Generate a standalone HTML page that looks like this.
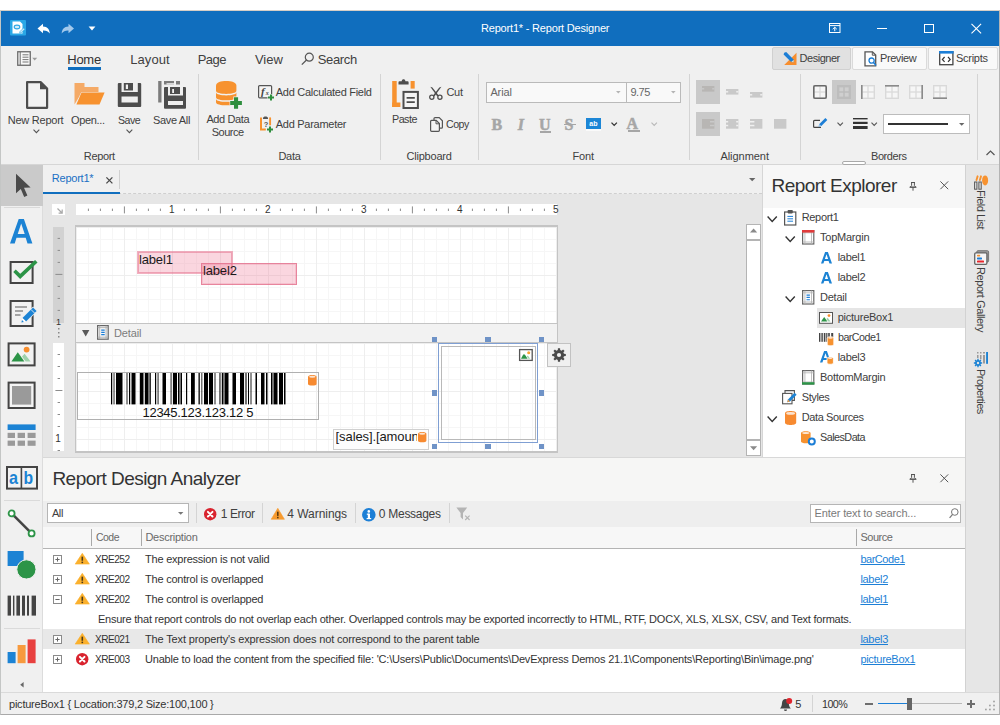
<!DOCTYPE html>
<html lang="en"><head><meta charset="utf-8"><title>Report1* - Report Designer</title>
<style>
html,body{margin:0;padding:0;background:#fff;}
body{width:1000px;height:725px;position:relative;overflow:hidden;font-family:"Liberation Sans",sans-serif;font-size:11px;color:#404040;}
div,svg,span.t,a.t{position:absolute;box-sizing:border-box;}
.t{white-space:pre;display:block;}
svg{overflow:visible;}

</style></head>
<body>
<div style="left:0px;top:10px;width:1000px;height:705px;background:#f0f0f0;border:1px solid #a9a9a9;border-top-color:#d6cec6;border-left-color:#c4c6c5;border-right-color:#b4b4b4;"></div>
<div style="left:1px;top:11px;width:998px;height:35px;background:#106ebe;"></div>
<span class="t" style='left:481.0px;top:23px;font-size:11px;line-height:11px;color:#fff;letter-spacing:-0.19px;'>Report1* - Report Designer</span>
<svg style="left:10px;top:20px;" width="16" height="16" viewBox="0 0 16 16"><rect x="0" y="0" width="16" height="15.5" rx="1" fill="#2aa7e6"/><path d="M2.500 1.500h7.500l2.500 2.500v9.500h-10z" fill="#fff"/><ellipse cx="7" cy="7" rx="2.800" ry="1.900" fill="#d6edf9" stroke="#2aa7e6" stroke-width="1.100"/><path d="M10 11.500l3.600-3.600 1.300 1.300-3.600 3.600-1.700.4z" fill="#c9e8f8" stroke="#2aa7e6" stroke-width=".6"/></svg>
<svg style="left:37px;top:22.5px;" width="14" height="12" viewBox="0 0 14 12"><path d="M0.5 5.5L6 0.8V3.6C10.5 3.6 12.6 6.5 12.8 10.6C11.2 8.3 9.3 7.4 6 7.5V10.2Z" fill="#fff"/></svg>
<svg style="left:61px;top:22.5px;" width="14" height="12" viewBox="0 0 14 12"><path d="M13 5.5L7.5 0.8V3.6C3 3.6 0.9 6.5 0.7 10.6C2.3 8.3 4.2 7.4 7.5 7.5V10.2Z" fill="#a3c9ec"/></svg>
<svg style="left:88px;top:26px;" width="8" height="5" viewBox="0 0 8 5"><path d="M0.6 0.6h6.8L4 4.4z" fill="#fff"/></svg>
<svg style="left:829px;top:23px;" width="12" height="10" viewBox="0 0 12 10"><rect x=".5" y=".5" width="10.5" height="9" fill="none" stroke="#fff" stroke-width="1"/><path d="M.5 2.6h10.5" stroke="#fff" stroke-width="1"/><path d="M5.75 8.2V4.3M3.7 6.2l2.05-2 2.05 2" fill="none" stroke="#fff" stroke-width="1"/></svg>
<div style="left:877px;top:28px;width:10px;height:1px;background:#fff;"></div>
<div style="left:924px;top:23.5px;width:10px;height:9.5px;border:1px solid #fff;"></div>
<svg style="left:971px;top:23px;" width="11" height="11" viewBox="0 0 11 11"><path d="M.5 .8l9.6 9.6M10.1 .8L.5 10.4" stroke="#fff" stroke-width="1.1" fill="none"/></svg>
<svg style="left:17px;top:51px;" width="22" height="16" viewBox="0 0 22 16"><rect x=".75" y=".75" width="12.5" height="13.5" fill="#f8f8f8" stroke="#6a6a6a" stroke-width="1.3"/><path d="M3.2 1v13" stroke="#6a6a6a" stroke-width="1"/><path d="M5.5 3.8h6M5.5 6.2h6M5.5 8.6h6M5.5 11h6" stroke="#777" stroke-width="1"/><path d="M15.2 6.8h5l-2.5 2.8z" fill="#9a9a9a"/></svg>
<span class="t" style='left:67.28px;top:52.6px;font-size:13px;line-height:13px;color:#333;letter-spacing:-0.26px;'>Home</span>
<div style="left:68px;top:67px;width:33.4px;height:2.6px;background:#106ebe;"></div>
<span class="t" style='left:130.28px;top:52.6px;font-size:13px;line-height:13px;color:#404040;letter-spacing:0.05px;'>Layout</span>
<span class="t" style='left:197.69px;top:52.6px;font-size:13px;line-height:13px;color:#404040;letter-spacing:-0.55px;'>Page</span>
<span class="t" style='left:254.88px;top:52.6px;font-size:13px;line-height:13px;color:#404040;letter-spacing:-0.01px;'>View</span>
<svg style="left:301px;top:52px;" width="14" height="14" viewBox="0 0 14 14"><circle cx="8.3" cy="5.2" r="4" fill="none" stroke="#555" stroke-width="1.2"/><path d="M5.5 8L.8 12.6" stroke="#555" stroke-width="1.3"/></svg>
<span class="t" style='left:317.69px;top:52.6px;font-size:13px;line-height:13px;color:#404040;letter-spacing:-0.34px;'>Search</span>
<div style="left:772px;top:47px;width:79px;height:22.5px;background:#e1e1e1;border:1px solid #d0d0d0;border-radius:2px;"></div>
<div style="left:852px;top:47px;width:74.5px;height:22.5px;background:#f9f9f9;border:1px solid #dadada;border-radius:2px;"></div>
<div style="left:928px;top:47px;width:70px;height:22.5px;background:#f9f9f9;border:1px solid #dadada;border-radius:2px;"></div>
<svg style="left:783px;top:52px;" width="14" height="13" viewBox="0 0 14 13"><path d="M13.5 0.8V13H1.2z" fill="#f78e2e"/><path d="M1.2 0.8l2-0.8 7.6 7.8-0.2 2.4-2.4-.2L0.6 2.4z" fill="#1c7ed6"/><path d="M8.2 10l2.4.2.2-2.4" fill="#f5d9b8"/></svg>
<span class="t" style='left:799.6px;top:53px;font-size:11px;line-height:11px;color:#404040;letter-spacing:-0.49px;'>Designer</span>
<svg style="left:864px;top:51px;" width="14" height="16" viewBox="0 0 14 16"><path d="M1 .8h7.5l3.2 3.2v10.8H1z" fill="#fff" stroke="#555" stroke-width="1.3"/><path d="M8.3 .8v3.4h3.4" fill="none" stroke="#555" stroke-width="1"/><circle cx="7.6" cy="9.6" r="2.6" fill="#fff" stroke="#1c7ed6" stroke-width="1.3"/><path d="M9.5 11.6l2.6 2.8" stroke="#1c7ed6" stroke-width="1.5"/></svg>
<span class="t" style='left:880.0px;top:53px;font-size:11px;line-height:11px;color:#404040;letter-spacing:-0.42px;'>Preview</span>
<svg style="left:939px;top:51px;" width="15" height="15" viewBox="0 0 15 15"><rect x=".7" y=".7" width="13.2" height="13" fill="#fff" stroke="#444" stroke-width="1.3"/><rect x="0" y="0" width="14.6" height="2.6" fill="#1c7ed6"/><path d="M5.6 6L3.4 8.4l2.2 2.4M9 6l2.2 2.4L9 10.8" fill="none" stroke="#333" stroke-width="1.2"/></svg>
<span class="t" style='left:956.0px;top:53px;font-size:11px;line-height:11px;color:#404040;letter-spacing:-0.27px;'>Scripts</span>
<div style="left:1px;top:164px;width:998px;height:1px;background:#d6d6d6;"></div>
<div style="left:198px;top:74px;width:1px;height:86px;background:#d4d4d4;"></div>
<div style="left:380px;top:74px;width:1px;height:86px;background:#d4d4d4;"></div>
<div style="left:478px;top:74px;width:1px;height:86px;background:#d4d4d4;"></div>
<div style="left:689px;top:74px;width:1px;height:86px;background:#d4d4d4;"></div>
<div style="left:800px;top:74px;width:1px;height:86px;background:#d4d4d4;"></div>
<div style="left:977px;top:74px;width:1px;height:86px;background:#d4d4d4;"></div>
<span class="t" style='left:83.8px;top:151px;font-size:11px;line-height:11px;color:#404040;letter-spacing:-0.33px;'>Report</span>
<span class="t" style='left:278.39px;top:151px;font-size:11px;line-height:11px;color:#404040;letter-spacing:-0.21px;'>Data</span>
<span class="t" style='left:406.39px;top:151px;font-size:11px;line-height:11px;color:#404040;letter-spacing:-0.19px;'>Clipboard</span>
<span class="t" style='left:572.39px;top:151px;font-size:11px;line-height:11px;color:#404040;letter-spacing:-0.14px;'>Font</span>
<span class="t" style='left:720.39px;top:151px;font-size:11px;line-height:11px;color:#404040;letter-spacing:-0.04px;'>Alignment</span>
<span class="t" style='left:871.0px;top:151px;font-size:11px;line-height:11px;color:#404040;letter-spacing:-0.42px;'>Borders</span>
<svg style="left:26px;top:81px;" width="23" height="29" viewBox="0 0 23 29"><path d="M1.100 1.100h13.500l6.500 6.500v19.200H1.100z" fill="#f2f2f2" stroke="#4d4d4d" stroke-width="2.200" stroke-linejoin="round"/><path d="M14 1.100v7.200h7.200z" fill="#4d4d4d"/></svg>
<span class="t" style='left:7.79px;top:114.6px;font-size:11px;line-height:11px;color:#404040;letter-spacing:-0.25px;'>New Report</span>
<svg style="left:33px;top:129px;" width="7" height="5" viewBox="0 0 7 5"><path d="M.5 .7l2.9 3 2.9-3" fill="none" stroke="#555" stroke-width="1.1"/></svg>
<svg style="left:74px;top:83px;" width="32" height="23" viewBox="0 0 32 23"><path d="M.5 0h10v4h14v5H8L.5 21.500z" fill="#f5aa66"/><path d="M7.500 9.500H30.600L25.500 21.600H2.400z" fill="#f7922f" stroke="#f0f0f0" stroke-width="1" paint-order="stroke"/></svg>
<span class="t" style='left:70.99px;top:114.6px;font-size:11px;line-height:11px;color:#404040;letter-spacing:-0.34px;'>Open...</span>
<svg style="left:117px;top:83px;" width="25" height="25" viewBox="0 0 25 25"><rect x=".8" y="0" width="23.400" height="24" rx="1" fill="#4d4d4d"/><rect x="4.500" y="0" width="16.300" height="9" fill="#f0f0f0"/><rect x="6.800" y="0" width="9.200" height="7.500" fill="#4d4d4d"/><rect x="8.800" y="1.500" width="2.200" height="4.500" fill="#f0f0f0"/><rect x="4.500" y="13.500" width="16.300" height="6" fill="#f0f0f0"/></svg>
<span class="t" style='left:117.8px;top:114.6px;font-size:11px;line-height:11px;color:#404040;letter-spacing:-0.55px;transform-origin:0 50%;transform:scaleX(0.9647);'>Save</span>
<svg style="left:126px;top:129px;" width="7" height="5" viewBox="0 0 7 5"><path d="M.5 .7l2.9 3 2.9-3" fill="none" stroke="#555" stroke-width="1.1"/></svg>
<svg style="left:158px;top:81px;" width="29" height="28" viewBox="0 0 29 28"><rect x=".2" y="0" width="3.300" height="21.500" fill="#7c7c7c"/><rect x="6" y="0" width="10" height="3.500" fill="#7c7c7c"/><rect x="8.500" y="2.200" width="7.500" height="1.300" fill="#f0f0f0"/><rect x="18" y="0" width="4" height="3.500" fill="#7c7c7c"/><rect x="6" y="6" width="22" height="21.800" rx="1" fill="#4d4d4d"/><rect x="10" y="6" width="15" height="8.500" fill="#f0f0f0"/><rect x="12" y="6" width="10" height="7" fill="#4d4d4d"/><rect x="14.200" y="8" width="1.800" height="4" fill="#f0f0f0"/><rect x="10" y="20" width="15" height="4" fill="#f0f0f0"/></svg>
<span class="t" style='left:153.0px;top:114.6px;font-size:11px;line-height:11px;color:#404040;letter-spacing:-0.34px;'>Save All</span>
<svg style="left:216px;top:81px;" width="27" height="29" viewBox="0 0 27 29"><path d="M0 4.400C0 -1.500 20.400 -1.500 20.400 4.400V9.800C20.400 14 0 14 0 9.800z" fill="#f7922f"/><path d="M0 11.300C0 15.500 20.400 15.500 20.400 11.300V16.200C20.400 20.400 0 20.400 0 16.200z" fill="#f7922f"/><path d="M0 17.700C0 21.900 20.400 21.900 20.400 17.700V21.200C20.400 25.400 0 25.400 0 21.200z" fill="#f7922f"/><path d="M17.400 15.600h5.200v3.600h3.800v5.400h-3.800v3.600h-5.200v-3.600h-3.800v-5.400h3.800z" fill="#f0f0f0"/><path d="M18 16.200h4.100v3.700h3.800v4.200h-3.800v3.700H18v-3.700h-3.800v-4.200H18z" fill="#2e8e3e"/></svg>
<span class="t" style='left:206.4px;top:114px;font-size:11px;line-height:11px;color:#404040;letter-spacing:-0.38px;'>Add Data</span>
<span class="t" style='left:211.8px;top:126.6px;font-size:11px;line-height:11px;color:#404040;letter-spacing:-0.53px;'>Source</span>
<svg style="left:258px;top:85px;" width="17" height="16" viewBox="0 0 17 16"><rect x=".6" y=".6" width="13" height="12.200" rx="1" fill="#f4f4f4" stroke="#555" stroke-width="1.200"/><text x="3" y="10.400" font-family="Liberation Serif,serif" font-style="italic" font-weight="bold" font-size="11" fill="#444">f</text><text x="7.800" y="10.400" font-family="Liberation Serif,serif" font-style="italic" font-weight="bold" font-size="6" fill="#444">x</text><path d="M11.500 9h3v2h2v3h-2v2h-3v-2h-2v-3h2z" fill="#f0f0f0"/><path d="M12 9.500h2v2h2v2h-2v2h-2v-2h-2v-2h2z" fill="#2e8e3e"/></svg>
<span class="t" style='left:275.79px;top:87.4px;font-size:11px;line-height:11px;color:#404040;letter-spacing:-0.28px;'>Add Calculated Field</span>
<svg style="left:260px;top:116px;" width="15" height="16" viewBox="0 0 15 16"><path d="M1 1.400V13.400H5.800" fill="none" stroke="#f7922f" stroke-width="2"/><path d="M10.100 1.400V9.300" fill="none" stroke="#f7922f" stroke-width="1.900"/><path d="M3 3V2.200C3 -.2 8 -.2 8 2.200V3z" fill="#555"/><text x="3.700" y="10.600" font-size="7.500" font-weight="bold" fill="#555" font-family="Liberation Sans,sans-serif">?</text><path d="M8.500 10h3v2h2v3h-2v2h-3v-2h-2v-3h2z" fill="#f0f0f0"/><path d="M9 10.500h2v2h2v2h-2v2H9v-2H7v-2h2z" fill="#2e8e3e"/></svg>
<span class="t" style='left:275.79px;top:119px;font-size:11px;line-height:11px;color:#404040;letter-spacing:-0.28px;'>Add Parameter</span>
<svg style="left:392px;top:79px;" width="28" height="31" viewBox="0 0 28 31"><rect x=".2" y="2" width="4.500" height="26" fill="#f7922f"/><rect x=".2" y="23.500" width="8.200" height="4.500" fill="#f7922f"/><rect x="18.600" y="2" width="4.100" height="7.600" fill="#f7922f"/><path d="M6.500 5.500V3.200a1 1 0 0 1 1-1H9.700C10 -.4 13.100 -.4 13.400 2.200H15.600a1 1 0 0 1 1 1V5.500z" fill="#4d4d4d"/><rect x="11.500" y="12.900" width="14.400" height="16.100" fill="#f5f5f5" stroke="#4d4d4d" stroke-width="2"/><path d="M14.600 18.800h8.200M14.600 23.100h8.200" stroke="#4d4d4d" stroke-width="1.700"/></svg>
<span class="t" style='left:391.79px;top:114px;font-size:11px;line-height:11px;color:#404040;letter-spacing:-0.55px;transform-origin:0 50%;transform:scaleX(0.9795);'>Paste</span>
<svg style="left:429px;top:87px;" width="14" height="14" viewBox="0 0 14 14"><path d="M1.300 -.2L3.400 .4 9.700 8.600 8.300 9.500z" fill="#4d4d4d"/><path d="M12.400 -.2L10.300 .4 4 8.600 5.400 9.500z" fill="#4d4d4d"/><circle cx="2.800" cy="10.300" r="2.100" fill="none" stroke="#4d4d4d" stroke-width="1.300"/><circle cx="10.900" cy="10.300" r="2.100" fill="none" stroke="#4d4d4d" stroke-width="1.300"/></svg>
<span class="t" style='left:446.39px;top:87.4px;font-size:11px;line-height:11px;color:#404040;letter-spacing:-0.26px;'>Cut</span>
<svg style="left:430px;top:117px;" width="13" height="15" viewBox="0 0 13 15"><path d="M4 3.400V1.600a1 1 0 0 1 1-1h4.200l3.200 3.200v6.400a1 1 0 0 1-1 1H9.500" fill="#f4f4f4" stroke="#555" stroke-width="1.200"/><path d="M1.600 3.400h4.600l3.200 3.200v6.700a1 1 0 0 1-1 1H1.600a1 1 0 0 1-1-1V4.400a1 1 0 0 1 1-1z" fill="#f4f4f4" stroke="#555" stroke-width="1.200"/><path d="M6 3.600v3.200h3.200" fill="none" stroke="#555" stroke-width="1"/></svg>
<span class="t" style='left:446.39px;top:119.4px;font-size:11px;line-height:11px;color:#404040;letter-spacing:-0.55px;transform-origin:0 50%;transform:scaleX(0.9656);'>Copy</span>
<div style="left:486px;top:82px;width:140.5px;height:21px;background:#f9f9f9;border:1px solid #bababa;"></div>
<div style="left:626px;top:82px;width:55px;height:21px;background:#f9f9f9;border:1px solid #bababa;"></div>
<span class="t" style='left:490.39px;top:87px;font-size:11px;line-height:11px;color:#666;letter-spacing:-0.1px;'>Arial</span>
<span class="t" style='left:630.39px;top:87px;font-size:11px;line-height:11px;color:#666;letter-spacing:-0.47px;'>9.75</span>
<svg style="left:616px;top:91px;" width="5" height="3" viewBox="0 0 5 3"><path d="M0 0h4.600L2.300 2.600z" fill="#b4b4b4"/></svg>
<svg style="left:670.5px;top:91px;" width="5" height="3" viewBox="0 0 5 3"><path d="M0 0h4.600L2.300 2.600z" fill="#b4b4b4"/></svg>
<span class="t" style='left:491.52px;top:117px;font-size:16px;line-height:16px;color:#a6a6a6;font-family:"Liberation Serif",serif;font-weight:bold;-webkit-text-stroke:.5px #a6a6a6;'>B</span>
<span class="t" style='left:517.72px;top:117px;font-size:16px;line-height:16px;color:#a6a6a6;font-family:"Liberation Serif",serif;font-weight:bold;font-style:italic;-webkit-text-stroke:.5px #a6a6a6;'>I</span>
<span class="t" style='left:539.12px;top:117px;font-size:16px;line-height:16px;color:#a6a6a6;font-family:"Liberation Serif",serif;font-weight:bold;-webkit-text-stroke:.5px #a6a6a6;'>U</span>
<div style="left:540.4px;top:131.2px;width:10.8px;height:1.4px;background:#a6a6a6;"></div>
<span class="t" style='left:564.52px;top:117px;font-size:16px;line-height:16px;color:#a6a6a6;font-family:"Liberation Serif",serif;font-weight:bold;-webkit-text-stroke:.5px #a6a6a6;'>S</span>
<div style="left:564px;top:124px;width:12px;height:1.3px;background:#a6a6a6;"></div>
<div style="left:586px;top:118px;width:15px;height:10.6px;background:#1c86d6;"></div>
<div style="left:586px;top:128.6px;width:15px;height:2.6px;background:#fafafa;"></div>
<span class="t" style='left:589.22px;top:119.6px;font-size:7px;line-height:7px;color:#fff;letter-spacing:0.21px;font-weight:bold;'>ab</span>
<svg style="left:611px;top:122px;" width="7" height="5" viewBox="0 0 7 5"><path d="M.5 .6l2.700 2.800 2.700-2.800" fill="none" stroke="#333" stroke-width="1.300"/></svg>
<span class="t" style='left:626.52px;top:116.19999999999999px;font-size:16px;line-height:16px;color:#a6a6a6;font-family:"Liberation Serif",serif;font-weight:bold;-webkit-text-stroke:.5px #a6a6a6;'>A</span>
<div style="left:627.6px;top:130.2px;width:12px;height:1.8px;background:#a6a6a6;"></div>
<svg style="left:650.5px;top:122px;" width="7" height="5" viewBox="0 0 7 5"><path d="M.5 .6l2.700 2.800 2.700-2.800" fill="none" stroke="#b8b8b8" stroke-width="1.100"/></svg>
<div style="left:696.4px;top:80.4px;width:24px;height:24px;background:#c9c9c9;"></div>
<div style="left:696.4px;top:112.4px;width:24px;height:24px;background:#c9c9c9;"></div>
<svg style="left:702.3px;top:86.1px;" width="12.4" height="5.6" viewBox="0 0 12.4 5.6"><rect x="0" y="0" width="12.4" height="5.600" fill="#b8b6b4"/><rect x="0" y="2.100" width="2.200" height="1.400" fill="#c9c9c9"/><rect x="10.2" y="2.100" width="2.200" height="1.400" fill="#c9c9c9"/></svg>
<svg style="left:726.3px;top:89.1px;" width="12.4" height="5.6" viewBox="0 0 12.4 5.6"><rect x="0" y="0" width="12.4" height="5.600" fill="#c9c9c9"/><rect x="0" y="2.100" width="2.200" height="1.400" fill="#f0f0f0"/><rect x="10.2" y="2.100" width="2.200" height="1.400" fill="#f0f0f0"/></svg>
<svg style="left:750.3px;top:92.1px;" width="12.4" height="5.6" viewBox="0 0 12.4 5.6"><rect x="0" y="0" width="12.4" height="5.600" fill="#c9c9c9"/><rect x="0" y="2.100" width="2.200" height="1.400" fill="#f0f0f0"/><rect x="10.2" y="2.100" width="2.200" height="1.400" fill="#f0f0f0"/></svg>
<svg style="left:702.3px;top:119.1px;" width="12.4" height="9.7" viewBox="0 0 12.4 9.7"><rect x="0" y="0" width="12.4" height="9.700" fill="#b8b6b4"/><rect x="8.0" y="2" width="4.400" height="1.500" fill="#c9c9c9"/><rect x="8.0" y="5.8" width="4.400" height="1.500" fill="#c9c9c9"/></svg>
<svg style="left:726.3px;top:119.1px;" width="12.4" height="9.7" viewBox="0 0 12.4 9.7"><rect x="0" y="0" width="12.4" height="9.700" fill="#c9c9c9"/><rect x="0" y="2" width="2.200" height="1.500" fill="#f0f0f0"/><rect x="10.2" y="2" width="2.200" height="1.500" fill="#f0f0f0"/><rect x="0" y="5.8" width="2.200" height="1.500" fill="#f0f0f0"/><rect x="10.2" y="5.8" width="2.200" height="1.500" fill="#f0f0f0"/></svg>
<svg style="left:750.3px;top:119.1px;" width="12.4" height="9.7" viewBox="0 0 12.4 9.7"><rect x="0" y="0" width="12.4" height="9.700" fill="#c9c9c9"/><rect x="0" y="2" width="4.400" height="1.500" fill="#f0f0f0"/><rect x="0" y="5.8" width="4.400" height="1.500" fill="#f0f0f0"/></svg>
<svg style="left:774.3px;top:119.1px;" width="12.4" height="9.7" viewBox="0 0 12.4 9.7"><rect x="0" y="0" width="12.4" height="9.700" fill="#c9c9c9"/></svg>
<svg style="left:813px;top:85px;" width="14" height="14" viewBox="0 0 14 14"><rect x="0" y="0" width="14" height="14" fill="#d9d9d9"/><rect x="1.4" y="1.4" width="5" height="5" fill="#f6f6f6"/><rect x="1.4" y="7.6" width="5" height="5" fill="#f6f6f6"/><rect x="7.6" y="1.4" width="5" height="5" fill="#f6f6f6"/><rect x="7.6" y="7.6" width="5" height="5" fill="#f6f6f6"/><rect x=".8" y=".8" width="12.400" height="12.400" rx="1.200" fill="none" stroke="#6a6a6a" stroke-width="1.600"/></svg>
<div style="left:832.4px;top:80.4px;width:24px;height:24px;background:#c9c9c9;"></div>
<svg style="left:837.4px;top:85px;" width="14" height="14" viewBox="0 0 14 14"><rect x="0" y="0" width="14" height="14" fill="#bdbdbd"/><rect x="2.400" y="2.400" width="3.800" height="3.800" fill="#cfcfcf"/><rect x="7.800" y="2.400" width="3.800" height="3.800" fill="#cfcfcf"/><rect x="2.400" y="7.800" width="3.800" height="3.800" fill="#cfcfcf"/><rect x="7.800" y="7.800" width="3.800" height="3.800" fill="#cfcfcf"/></svg>
<svg style="left:861px;top:85px;" width="14" height="14" viewBox="0 0 14 14"><rect x="0" y="0" width="14" height="14" fill="#d9d9d9"/><rect x="1.4" y="1.4" width="5" height="5" fill="#f6f6f6"/><rect x="1.4" y="7.6" width="5" height="5" fill="#f6f6f6"/><rect x="7.6" y="1.4" width="5" height="5" fill="#f6f6f6"/><rect x="7.6" y="7.6" width="5" height="5" fill="#f6f6f6"/><rect x="0" y="0" width="1.600" height="14" fill="#8a8a8a"/></svg>
<svg style="left:885px;top:85px;" width="14" height="14" viewBox="0 0 14 14"><rect x="0" y="0" width="14" height="14" fill="#d9d9d9"/><rect x="1.4" y="1.4" width="5" height="5" fill="#f6f6f6"/><rect x="1.4" y="7.6" width="5" height="5" fill="#f6f6f6"/><rect x="7.6" y="1.4" width="5" height="5" fill="#f6f6f6"/><rect x="7.6" y="7.6" width="5" height="5" fill="#f6f6f6"/><rect x="0" y="0" width="14" height="1.600" fill="#8a8a8a"/></svg>
<svg style="left:909px;top:85px;" width="14" height="14" viewBox="0 0 14 14"><rect x="0" y="0" width="14" height="14" fill="#d9d9d9"/><rect x="1.4" y="1.4" width="5" height="5" fill="#f6f6f6"/><rect x="1.4" y="7.6" width="5" height="5" fill="#f6f6f6"/><rect x="7.6" y="1.4" width="5" height="5" fill="#f6f6f6"/><rect x="7.6" y="7.6" width="5" height="5" fill="#f6f6f6"/><rect x="12.400" y="0" width="1.600" height="14" fill="#8a8a8a"/></svg>
<svg style="left:933px;top:85px;" width="14" height="14" viewBox="0 0 14 14"><rect x="0" y="0" width="14" height="14" fill="#d9d9d9"/><rect x="1.4" y="1.4" width="5" height="5" fill="#f6f6f6"/><rect x="1.4" y="7.6" width="5" height="5" fill="#f6f6f6"/><rect x="7.6" y="1.4" width="5" height="5" fill="#f6f6f6"/><rect x="7.6" y="7.6" width="5" height="5" fill="#f6f6f6"/><rect x="0" y="12.400" width="14" height="1.600" fill="#8a8a8a"/></svg>
<svg style="left:813px;top:117px;" width="16" height="12" viewBox="0 0 16 12"><path d="M7 3.400H1.600c-.6 0-1 .4-1 1v5c0 .6.400 1 1 1H8" fill="none" stroke="#444" stroke-width="1.200"/><path d="M5.600 9.600l.8-2.600 6-6 1.900 1.900-6 6z" fill="#1c7ed6"/><path d="M5.600 9.600l.8-2.600 1.900 1.900z" fill="#9cc7ee"/></svg>
<svg style="left:837.4px;top:122px;" width="7" height="5" viewBox="0 0 7 5"><path d="M.5 .6l2.700 2.800 2.700-2.800" fill="none" stroke="#555" stroke-width="1.100"/></svg>
<svg style="left:853px;top:117.6px;" width="15" height="11" viewBox="0 0 15 11"><rect x="0" y="0" width="14.600" height="1.400" fill="#333"/><rect x="0" y="3.800" width="14.600" height="2.200" fill="#333"/><rect x="0" y="8" width="14.600" height="3" fill="#333"/></svg>
<svg style="left:871px;top:122px;" width="7" height="5" viewBox="0 0 7 5"><path d="M.5 .6l2.700 2.800 2.700-2.800" fill="none" stroke="#555" stroke-width="1.100"/></svg>
<div style="left:883px;top:114.4px;width:86.6px;height:20px;background:#fff;border:1px solid #bcbcbc;"></div>
<div style="left:888px;top:123.4px;width:60.4px;height:1.5px;background:#333;"></div>
<svg style="left:959px;top:122.8px;" width="6" height="3" viewBox="0 0 6 3"><path d="M0 0h5.400L2.700 2.800z" fill="#666"/></svg>
<svg style="left:985.6px;top:150px;" width="9" height="6" viewBox="0 0 9 6"><path d="M.5 5l4-4 4 4" fill="none" stroke="#555" stroke-width="1.200"/></svg>
<div style="left:842.4px;top:161px;width:24px;height:4px;background:#fff;border:1px solid #a9a9a9;border-radius:2px;"></div>
<div style="left:1px;top:165px;width:41px;height:527px;background:#f0f0f0;"></div>
<div style="left:42px;top:165px;width:1px;height:527px;background:#dcdcdc;"></div>
<div style="left:1px;top:164.5px;width:41.5px;height:41px;background:#cacaca;"></div>
<svg style="left:15px;top:173px;" width="17" height="25" viewBox="0 0 17 25"><path d="M1 .8v19.500l4.800-4.400 3.400 8 3.200-1.400-3.400-7.800 6.600-.3z" fill="#4a4a4a"/></svg>
<div style="left:4px;top:207.4px;width:36px;height:1px;background:#dadada;"></div>
<svg style="left:10px;top:219px;" width="23" height="25" viewBox="0 0 23 25"><path d="M8.700 0h5.200L22.400 24.400h-4.900l-1.800-5.600H6.500L4.700 24.400H0zM11.200 4.600L7.700 15h7z" fill="#1c83d4"/></svg>
<svg style="left:9px;top:258px;" width="30" height="27" viewBox="0 0 30 27"><rect x="1.600" y="4" width="22" height="21" fill="#f1f1f1" stroke="#444" stroke-width="2"/><path d="M5.500 12.800l5.700 5.600L27.300 3.200" fill="none" stroke="#2c9447" stroke-width="3.600"/></svg>
<svg style="left:9px;top:300px;" width="30" height="28" viewBox="0 0 30 28"><rect x="1.600" y="1" width="22" height="25" fill="#f1f1f1" stroke="#444" stroke-width="2"/><path d="M6 7h12M6 11h8M6 15h5.500" stroke="#8a8a8a" stroke-width="1.500"/><path d="M11.600 23.400L12.900 17.500 24.060 6.400 28.600 10.940 17.500 22.100z" fill="#f0f0f0"/><path d="M13.460 18L24.060 7.400 27.600 10.940 17 21.540z" fill="#1c83d4"/><path d="M12.400 22.600L13.460 18 17 21.540z" fill="#fff"/><path d="M12.400 22.600l.6-2.500 1.900 1.900z" fill="#1c83d4"/><path d="M22 9.500l3.500 3.500" stroke="#f0f0f0" stroke-width=".9"/></svg>
<svg style="left:7px;top:342px;" width="30" height="25" viewBox="0 0 30 25"><rect x="1.600" y="1.400" width="26" height="22" fill="#f2f2f2" stroke="#444" stroke-width="2"/><path d="M4.400 19.600l6.400-9.400 6.600 9.400z" fill="#2c9447"/><path d="M15 14.400l2.600-2.600 6 7.800h-5z" fill="#9fd1ab"/><circle cx="19.600" cy="7.600" r="2.900" fill="#f78d2d"/></svg>
<svg style="left:7px;top:381px;" width="30" height="29" viewBox="0 0 30 29"><rect x="1.600" y="1.600" width="26" height="25.400" fill="#f4f4f4" stroke="#444" stroke-width="2"/><rect x="5" y="5" width="19.200" height="18.600" fill="#9a9a9a"/></svg>
<svg style="left:7px;top:424px;" width="30" height="23" viewBox="0 0 30 23"><rect x=".6" y=".4" width="28" height="5.600" fill="#1c83d4"/><rect x="0.6" y="8.8" width="7.4" height="5.200" fill="#9a9a9a"/><rect x="10.6" y="8.8" width="7.4" height="5.200" fill="#9a9a9a"/><rect x="20.6" y="8.8" width="8" height="5.200" fill="#9a9a9a"/><rect x="0.6" y="16.6" width="7.4" height="5.200" fill="#9a9a9a"/><rect x="10.6" y="16.6" width="7.4" height="5.200" fill="#9a9a9a"/><rect x="20.6" y="16.6" width="8" height="5.200" fill="#9a9a9a"/></svg>
<svg style="left:6px;top:466px;" width="33" height="24" viewBox="0 0 33 24"><rect x="1" y="1" width="30" height="21.600" fill="#f2f2f2" stroke="#444" stroke-width="2"/><path d="M15.400 1v21.600" stroke="#444" stroke-width="1.600"/><text x="3" y="18" textLength="9" lengthAdjust="spacingAndGlyphs" font-family="Liberation Sans,sans-serif" font-weight="bold" font-size="19" fill="#1c83d4">a</text><text x="17.400" y="18" textLength="9.600" lengthAdjust="spacingAndGlyphs" font-family="Liberation Sans,sans-serif" font-weight="bold" font-size="19" fill="#1c83d4">b</text></svg>
<div style="left:4px;top:500px;width:36px;height:1px;background:#dadada;"></div>
<svg style="left:7px;top:509px;" width="30" height="30" viewBox="0 0 30 30"><path d="M4.600 4.400l20 20" stroke="#444" stroke-width="2.600"/><circle cx="4.600" cy="4.400" r="3" fill="#fff" stroke="#2c9447" stroke-width="1.800"/><circle cx="24.600" cy="24.400" r="3" fill="#fff" stroke="#2c9447" stroke-width="1.800"/></svg>
<svg style="left:7px;top:550px;" width="30" height="30" viewBox="0 0 30 30"><rect x=".6" y="1" width="16" height="15" fill="#1c83d4"/><circle cx="19.400" cy="19.400" r="9.600" fill="#2c9447" stroke="#f0f0f0" stroke-width="1"/></svg>
<svg style="left:7px;top:595px;" width="30" height="21" viewBox="0 0 30 21"><rect x="0.6" y=".6" width="3.4" height="20" fill="#444"/><rect x="6" y=".6" width="1.4" height="20" fill="#444"/><rect x="9.4" y=".6" width="3.6" height="20" fill="#444"/><rect x="15" y=".6" width="3" height="20" fill="#444"/><rect x="20" y=".6" width="2" height="20" fill="#444"/><rect x="24.6" y=".6" width="4.4" height="20" fill="#444"/></svg>
<div style="left:4px;top:628px;width:36px;height:1px;background:#dadada;"></div>
<svg style="left:7px;top:639px;" width="30" height="25" viewBox="0 0 30 25"><rect x=".6" y="13" width="8" height="11.200" fill="#1c83d4"/><rect x="10.600" y="6" width="8" height="18.200" fill="#f79a3e"/><rect x="20.600" y=".4" width="8" height="23.800" fill="#e8403f"/></svg>
<svg style="left:19.6px;top:682px;" width="4" height="6" viewBox="0 0 4 6"><path d="M3.600 0v5.400L.2 2.700z" fill="#666"/></svg>
<div style="left:43px;top:165px;width:719px;height:28px;background:#f0f0f0;"></div>
<div style="left:43px;top:193px;width:719px;height:1px;border-top:1px dashed #cfcfcf;"></div>
<div style="left:43px;top:191.6px;width:77px;height:2.4px;background:#106ebe;"></div>
<div style="left:119px;top:170px;width:1px;height:19px;background:#d0d0d0;"></div>
<span class="t" style='left:51.8px;top:173.4px;font-size:11px;line-height:11px;color:#1a6fc4;letter-spacing:-0.23px;'>Report1*</span>
<svg style="left:106px;top:176.6px;" width="7" height="7" viewBox="0 0 7 7"><path d="M.4 .4l6 6M6.400 .4l-6 6" stroke="#4a4a4a" stroke-width="1.300" fill="none"/></svg>
<svg style="left:748.6px;top:178px;" width="7" height="4" viewBox="0 0 7 4"><path d="M0 0h6.400L3.200 3.200z" fill="#666"/></svg>
<div style="left:43px;top:194px;width:719px;height:263px;background:#e6e6e6;"></div>
<div style="left:52.2px;top:203.6px;width:12.6px;height:11.4px;background:#fff;"></div>
<svg style="left:57.4px;top:208.4px;" width="6" height="6" viewBox="0 0 6 6"><path d="M.5 .5l4.500 4.500M5.200 1.600v3.600h-3.600" fill="none" stroke="#a8a8a8" stroke-width="1.200"/></svg>
<div style="left:76px;top:203.6px;width:480.6px;height:11.4px;background:#fff;"></div>
<svg style="left:76px;top:203.6px;" width="481" height="12" viewBox="0 0 481 12"><rect x="11.9" y="4.600" width="1" height="2.400" fill="#8c8c8c"/><rect x="23.9" y="4.600" width="1" height="2.400" fill="#8c8c8c"/><rect x="35.9" y="4.600" width="1" height="2.400" fill="#8c8c8c"/><rect x="47.9" y="2.400" width="1" height="7" fill="#8c8c8c"/><rect x="59.9" y="4.600" width="1" height="2.400" fill="#8c8c8c"/><rect x="71.9" y="4.600" width="1" height="2.400" fill="#8c8c8c"/><rect x="83.9" y="4.600" width="1" height="2.400" fill="#8c8c8c"/><rect x="107.9" y="4.600" width="1" height="2.400" fill="#8c8c8c"/><rect x="119.9" y="4.600" width="1" height="2.400" fill="#8c8c8c"/><rect x="131.9" y="4.600" width="1" height="2.400" fill="#8c8c8c"/><rect x="143.9" y="2.400" width="1" height="7" fill="#8c8c8c"/><rect x="155.9" y="4.600" width="1" height="2.400" fill="#8c8c8c"/><rect x="167.9" y="4.600" width="1" height="2.400" fill="#8c8c8c"/><rect x="179.9" y="4.600" width="1" height="2.400" fill="#8c8c8c"/><rect x="203.9" y="4.600" width="1" height="2.400" fill="#8c8c8c"/><rect x="215.9" y="4.600" width="1" height="2.400" fill="#8c8c8c"/><rect x="227.9" y="4.600" width="1" height="2.400" fill="#8c8c8c"/><rect x="239.9" y="2.400" width="1" height="7" fill="#8c8c8c"/><rect x="251.9" y="4.600" width="1" height="2.400" fill="#8c8c8c"/><rect x="263.9" y="4.600" width="1" height="2.400" fill="#8c8c8c"/><rect x="275.9" y="4.600" width="1" height="2.400" fill="#8c8c8c"/><rect x="299.9" y="4.600" width="1" height="2.400" fill="#8c8c8c"/><rect x="311.9" y="4.600" width="1" height="2.400" fill="#8c8c8c"/><rect x="323.9" y="4.600" width="1" height="2.400" fill="#8c8c8c"/><rect x="335.9" y="2.400" width="1" height="7" fill="#8c8c8c"/><rect x="347.9" y="4.600" width="1" height="2.400" fill="#8c8c8c"/><rect x="359.9" y="4.600" width="1" height="2.400" fill="#8c8c8c"/><rect x="371.9" y="4.600" width="1" height="2.400" fill="#8c8c8c"/><rect x="395.9" y="4.600" width="1" height="2.400" fill="#8c8c8c"/><rect x="407.9" y="4.600" width="1" height="2.400" fill="#8c8c8c"/><rect x="419.9" y="4.600" width="1" height="2.400" fill="#8c8c8c"/><rect x="431.9" y="2.400" width="1" height="7" fill="#8c8c8c"/><rect x="443.9" y="4.600" width="1" height="2.400" fill="#8c8c8c"/><rect x="455.9" y="4.600" width="1" height="2.400" fill="#8c8c8c"/><rect x="467.9" y="4.600" width="1" height="2.400" fill="#8c8c8c"/></svg>
<span class="t" style='left:169.05px;top:205.4px;font-size:10px;line-height:10px;color:#333;'>1</span>
<span class="t" style='left:265.05px;top:205.4px;font-size:10px;line-height:10px;color:#333;'>2</span>
<span class="t" style='left:361.05px;top:205.4px;font-size:10px;line-height:10px;color:#333;'>3</span>
<span class="t" style='left:457.05px;top:205.4px;font-size:10px;line-height:10px;color:#333;'>4</span>
<span class="t" style='left:553.05px;top:205.4px;font-size:10px;line-height:10px;color:#333;'>5</span>
<div style="left:53px;top:227px;width:11.4px;height:95.6px;background:#d2d2d2;"></div>
<div style="left:53px;top:343px;width:11.4px;height:108px;background:#fff;"></div>
<svg style="left:53px;top:227px;" width="12" height="96" viewBox="0 0 12 96"><rect x="4.600" y="10.9" width="2.400" height="1" fill="#8c8c8c"/><rect x="4.600" y="22.9" width="2.400" height="1" fill="#8c8c8c"/><rect x="4.600" y="34.9" width="2.400" height="1" fill="#8c8c8c"/><rect x="2.400" y="46.9" width="7" height="1" fill="#8c8c8c"/><rect x="4.600" y="58.9" width="2.400" height="1" fill="#8c8c8c"/><rect x="4.600" y="70.9" width="2.400" height="1" fill="#8c8c8c"/><rect x="4.600" y="82.9" width="2.400" height="1" fill="#8c8c8c"/></svg>
<span class="t" style='left:55.91px;top:318.4px;font-size:9px;line-height:9px;color:#333;'>1</span>
<svg style="left:57.6px;top:328.2px;" width="2" height="10" viewBox="0 0 2 10"><rect x="0" y="0" width="1.500" height="1.500" fill="#888"/><rect x="0" y="4" width="1.500" height="1.500" fill="#888"/><rect x="0" y="8" width="1.500" height="1.500" fill="#888"/></svg>
<svg style="left:53px;top:343px;" width="12" height="108" viewBox="0 0 12 108"><rect x="4.600" y="11.0" width="2.400" height="1" fill="#8c8c8c"/><rect x="4.600" y="23.0" width="2.400" height="1" fill="#8c8c8c"/><rect x="4.600" y="35.0" width="2.400" height="1" fill="#8c8c8c"/><rect x="2.400" y="47.0" width="7" height="1" fill="#8c8c8c"/><rect x="4.600" y="59.0" width="2.400" height="1" fill="#8c8c8c"/><rect x="4.600" y="71.0" width="2.400" height="1" fill="#8c8c8c"/><rect x="4.600" y="83.0" width="2.400" height="1" fill="#8c8c8c"/><rect x="4.600" y="107.0" width="2.400" height="1" fill="#8c8c8c"/></svg>
<span class="t" style='left:55.25px;top:434px;font-size:10px;line-height:10px;color:#333;'>1</span>
<div style="left:74.6px;top:225.4px;width:483.4px;height:227.4px;background:#c4c4c4;"></div>
<div style="left:76px;top:227px;width:480.6px;height:96px;background-color:#fff;background-image:linear-gradient(to right,#eeeeee 1px,transparent 1px),linear-gradient(to bottom,#eeeeee 1px,transparent 1px),linear-gradient(to right,#f6f6f6 1px,transparent 1px),linear-gradient(to bottom,#f6f6f6 1px,transparent 1px);background-size:48px 48px,48px 48px,12px 12px,12px 12px;background-position:0 0;"></div>
<div style="left:76px;top:324px;width:480.6px;height:18px;background:#f2f2f2;"></div>
<div style="left:76px;top:343px;width:480.6px;height:108.4px;background-color:#fff;background-image:linear-gradient(to right,#eeeeee 1px,transparent 1px),linear-gradient(to bottom,#eeeeee 1px,transparent 1px),linear-gradient(to right,#f6f6f6 1px,transparent 1px),linear-gradient(to bottom,#f6f6f6 1px,transparent 1px);background-size:48px 48px,48px 48px,12px 12px,12px 12px;background-position:0 0;"></div>
<svg style="left:82px;top:329.6px;" width="8" height="7" viewBox="0 0 8 7"><path d="M0 0h7.400L3.700 6.400z" fill="#5a5a5a"/></svg>
<svg style="left:97px;top:325px;" width="12" height="15" viewBox="0 0 12 15"><rect x=".6" y=".6" width="10.600" height="13.600" fill="#f7f7f7" stroke="#666" stroke-width="1.200"/><path d="M2.700 .6v13.600M9.100 .6v13.600M.6 2.600h10.600M.6 12.200h10.600" stroke="#a8a8a8" stroke-width=".8" fill="none"/><path d="M4.200 5.100h3.500M4.200 7.400h3.500M4.200 9.700h3.500" stroke="#1c7ed6" stroke-width="1.200"/></svg>
<span class="t" style='left:113.89px;top:328px;font-size:11px;line-height:11px;color:#7c7c7c;letter-spacing:-0.12px;'>Detail</span>
<div style="left:137px;top:251px;width:96px;height:23px;background:rgba(240,120,150,.30);border:1px solid rgba(226,105,135,.35);box-shadow:inset 0 0 0 1px rgba(226,105,135,.5);"></div>
<div style="left:201px;top:263px;width:96px;height:22px;background:rgba(240,120,150,.30);border:1px solid rgba(226,105,135,.75);box-shadow:inset 0 0 0 1px rgba(226,105,135,.2);"></div>
<span class="t" style='left:138.88px;top:252.60000000000002px;font-size:13px;line-height:13px;color:#1a1a1a;letter-spacing:-0.12px;'>label1</span>
<span class="t" style='left:202.88px;top:264px;font-size:13px;line-height:13px;color:#1a1a1a;letter-spacing:-0.12px;'>label2</span>
<div style="left:77.2px;top:372.2px;width:241.4px;height:47.4px;border:1px solid #b0b0b0;"></div>
<svg style="left:111px;top:373.4px;" width="175" height="32" viewBox="0 0 175 32"><rect x="0.0" y="0" width="1.2" height="31.400" fill="#000" opacity="1"/><rect x="2.3" y="0" width="1.5" height="31.400" fill="#000" opacity="0.55"/><rect x="5.0" y="0" width="6.5" height="31.400" fill="#000" opacity="1"/><rect x="15.2" y="0" width="1.6" height="31.400" fill="#000" opacity="0.55"/><rect x="18.0" y="0" width="1.2" height="31.400" fill="#000" opacity="1"/><rect x="20.5" y="0" width="4.0" height="31.400" fill="#000" opacity="1"/><rect x="28.8" y="0" width="3.7" height="31.400" fill="#000" opacity="1"/><rect x="33.8" y="0" width="3.2" height="31.400" fill="#000" opacity="1"/><rect x="37.0" y="0" width="1.8" height="31.400" fill="#000" opacity="0.55"/><rect x="38.8" y="0" width="1.0" height="31.400" fill="#000" opacity="1"/><rect x="44.0" y="0" width="1.2" height="31.400" fill="#000" opacity="1"/><rect x="46.3" y="0" width="1.6" height="31.400" fill="#000" opacity="0.55"/><rect x="51.5" y="0" width="3.5" height="31.400" fill="#000" opacity="1"/><rect x="59.3" y="0" width="1.6" height="31.400" fill="#000" opacity="0.55"/><rect x="62.0" y="0" width="4.0" height="31.400" fill="#000" opacity="1"/><rect x="67.0" y="0" width="1.2" height="31.400" fill="#000" opacity="1"/><rect x="68.2" y="0" width="1.8" height="31.400" fill="#000" opacity="0.55"/><rect x="70.0" y="0" width="1.0" height="31.400" fill="#000" opacity="1"/><rect x="75.0" y="0" width="1.2" height="31.400" fill="#000" opacity="1"/><rect x="80.0" y="0" width="3.8" height="31.400" fill="#000" opacity="1"/><rect x="87.5" y="0" width="1.3" height="31.400" fill="#000" opacity="1"/><rect x="90.0" y="0" width="1.5" height="31.400" fill="#000" opacity="0.55"/><rect x="93.0" y="0" width="4.0" height="31.400" fill="#000" opacity="1"/><rect x="98.0" y="0" width="4.0" height="31.400" fill="#000" opacity="1"/><rect x="103.2" y="0" width="1.6" height="31.400" fill="#000" opacity="0.55"/><rect x="108.0" y="0" width="1.8" height="31.400" fill="#000" opacity="0.55"/><rect x="110.8" y="0" width="1.2" height="31.400" fill="#000" opacity="1"/><rect x="112.0" y="0" width="2.0" height="31.400" fill="#000" opacity="0.55"/><rect x="114.0" y="0" width="3.5" height="31.400" fill="#000" opacity="1"/><rect x="121.5" y="0" width="3.5" height="31.400" fill="#000" opacity="1"/><rect x="129.0" y="0" width="4.0" height="31.400" fill="#000" opacity="1"/><rect x="134.0" y="0" width="2.0" height="31.400" fill="#000" opacity="0.55"/><rect x="137.0" y="0" width="1.0" height="31.400" fill="#000" opacity="1"/><rect x="139.2" y="0" width="1.6" height="31.400" fill="#000" opacity="0.55"/><rect x="144.5" y="0" width="1.5" height="31.400" fill="#000" opacity="1"/><rect x="150.0" y="0" width="3.5" height="31.400" fill="#000" opacity="1"/><rect x="155.0" y="0" width="1.5" height="31.400" fill="#000" opacity="1"/><rect x="160.0" y="0" width="1.0" height="31.400" fill="#000" opacity="1"/><rect x="161.0" y="0" width="2.0" height="31.400" fill="#000" opacity="0.55"/><rect x="163.0" y="0" width="3.5" height="31.400" fill="#000" opacity="1"/><rect x="168.0" y="0" width="4.0" height="31.400" fill="#000" opacity="1"/><rect x="173.0" y="0" width="1.5" height="31.400" fill="#000" opacity="1"/></svg>
<span class="t" style='left:142.48px;top:405.7px;font-size:13px;line-height:13px;color:#111;letter-spacing:-0.27px;'>12345.123.123.12 5</span>
<svg style="left:307.7px;top:374.7px;" width="8.6" height="10.6" viewBox="0 0 8.6 10.6"><path d="M0 1.70C0 -0.53 8.6 -0.53 8.6 1.70V8.90C8.6 11.13 0 11.13 0 8.90z" fill="#f78a30"/><ellipse cx="4.3" cy="1.80" rx="3.20" ry="1.06" fill="#fbe3cf"/></svg>
<div style="left:333.4px;top:428.6px;width:95.6px;height:21.2px;background:#fdfdfd;border:1px solid #d0d0d0;"></div>
<div style="left:335.6px;top:430px;width:84px;height:18px;overflow:hidden;"><span class="t" style="left:0;top:0;font-size:13px;line-height:13px;color:#1a1a1a;letter-spacing:-.1px">[sales].[amount]</span></div>
<div style="left:417px;top:431px;width:11px;height:17px;background:#fdfdfd;"></div>
<svg style="left:418.3px;top:431.8px;" width="8.4" height="10.4" viewBox="0 0 8.4 10.4"><path d="M0 1.66C0 -0.52 8.4 -0.52 8.4 1.66V8.74C8.4 10.92 0 10.92 0 8.74z" fill="#f78a30"/><ellipse cx="4.2" cy="1.77" rx="3.10" ry="1.04" fill="#fbe3cf"/></svg>
<div style="left:438.2px;top:343.2px;width:100px;height:99.4px;border:1px solid #7f9fd3;"></div>
<div style="left:440.6px;top:345.6px;width:95.4px;height:94.6px;border:1px solid #b9b9b9;"></div>
<div style="left:431.8px;top:336.9px;width:5.2px;height:5.2px;background:#6f93c7;"></div>
<div style="left:431.8px;top:390.4px;width:5.2px;height:5.2px;background:#6f93c7;"></div>
<div style="left:431.8px;top:443.8px;width:5.2px;height:5.2px;background:#6f93c7;"></div>
<div style="left:485.4px;top:336.9px;width:5.2px;height:5.2px;background:#6f93c7;"></div>
<div style="left:485.4px;top:443.8px;width:5.2px;height:5.2px;background:#6f93c7;"></div>
<div style="left:538.8px;top:336.9px;width:5.2px;height:5.2px;background:#6f93c7;"></div>
<div style="left:538.8px;top:390.4px;width:5.2px;height:5.2px;background:#6f93c7;"></div>
<div style="left:538.8px;top:443.8px;width:5.2px;height:5.2px;background:#6f93c7;"></div>
<svg style="left:519.4px;top:349px;" width="14" height="12" viewBox="0 0 14 12"><rect x=".6" y=".6" width="12.600" height="10.800" fill="#fff" stroke="#555" stroke-width="1.300"/><path d="M2 9.800L4.200 5.400 5.800 5.400 8.600 9.800z" fill="#2c9447"/><path d="M7.800 7.400l1-1 2.400 3.400H9.400z" fill="#9fd1ab"/><circle cx="9.700" cy="3.700" r="1.500" fill="#f9a12e"/></svg>
<div style="left:547.4px;top:343.4px;width:23.6px;height:23.4px;background:#f0f0f0;border:1px solid #c2c2c2;"></div>
<svg style="left:552px;top:348px;" width="14" height="14" viewBox="0 0 14 14"><path d="M13.82 5.92L13.82 8.08L11.96 8.19L11.35 9.66L12.58 11.06L11.06 12.58L9.66 11.35L8.19 11.96L8.08 13.82L5.92 13.82L5.81 11.96L4.34 11.35L2.94 12.58L1.42 11.06L2.65 9.66L2.04 8.19L0.18 8.08L0.18 5.92L2.04 5.81L2.65 4.34L1.42 2.94L2.94 1.42L4.34 2.65L5.81 2.04L5.92 0.18L8.08 0.18L8.19 2.04L9.66 2.65L11.06 1.42L12.58 2.94L11.35 4.34L11.96 5.81z" fill="#4a4a4a"/><circle cx="7" cy="7" r="2.1" fill="#f0f0f0"/></svg>
<div style="left:746.4px;top:224.4px;width:14.4px;height:231.6px;background:#fff;border:1px solid #b4b4b4;"></div>
<div style="left:746.4px;top:239px;width:14.4px;height:2px;background:#b4b4b4;"></div>
<div style="left:746.4px;top:439px;width:14.4px;height:2px;background:#b4b4b4;"></div>
<svg style="left:750px;top:228.4px;" width="8" height="5" viewBox="0 0 8 5"><path d="M0 4.400h7.200L3.600 .4z" fill="#8a8a8a"/></svg>
<svg style="left:750px;top:445.6px;" width="8" height="5" viewBox="0 0 8 5"><path d="M0 .2h7.200L3.600 4.200z" fill="#8a8a8a"/></svg>
<div style="left:762px;top:165px;width:203px;height:292px;background:#f7f7f7;"></div>
<div style="left:762px;top:165px;width:1px;height:292px;background:#d6d6d6;"></div>
<div style="left:763px;top:207.6px;width:202px;height:249.4px;background:#fff;"></div>
<span class="t" style='left:771.46px;top:175.7px;font-size:19px;line-height:19px;color:#333;letter-spacing:-0.52px;'>Report Explorer</span>
<svg style="left:909px;top:181.6px;" width="8" height="9" viewBox="0 0 8 9"><path d="M2 .5h4M2.600 .5v3L1.200 5.200h5.600L5.400 3.500v-3M.6 5.200h6.800M4 5.200v3.500" fill="none" stroke="#555" stroke-width="1"/></svg>
<svg style="left:939.8px;top:181.2px;" width="9" height="9" viewBox="0 0 9 9"><path d="M.4 .4l7.800 7.800M8.200 .4L.4 8.200" stroke="#555" stroke-width="1" fill="none"/></svg>
<div style="left:817.2px;top:308.2px;width:147.8px;height:19.4px;background:#e5e5e5;"></div>
<svg style="left:767.3px;top:215.7px;" width="11" height="7" viewBox="0 0 11 7"><path d="M.6 .6l4.600 4.800L9.800 .6" fill="none" stroke="#333" stroke-width="1.400"/></svg>
<svg style="left:783.6px;top:210px;" width="13" height="16" viewBox="0 0 13 16"><rect x=".6" y="2" width="11.200" height="13" fill="#fff" stroke="#555" stroke-width="1.200"/><rect x="3.600" y="0" width="5.200" height="3.400" rx=".8" fill="#555"/><path d="M3.400 6.400h5.600M3.400 8.800h5.600M3.400 11.200h5.600" stroke="#1c7ed6" stroke-width="1"/></svg>
<span class="t" style='left:801.79px;top:212.0px;font-size:11px;line-height:11px;color:#404040;letter-spacing:-0.36px;'>Report1</span>
<svg style="left:785px;top:235.7px;" width="11" height="7" viewBox="0 0 11 7"><path d="M.6 .6l4.600 4.800L9.800 .6" fill="none" stroke="#333" stroke-width="1.400"/></svg>
<svg style="left:801.9px;top:230.2px;" width="13" height="15" viewBox="0 0 13 15"><rect x=".6" y=".6" width="11.200" height="13.400" fill="#fff" stroke="#666" stroke-width="1.200"/><path d="M2.900 .6v13.400M9.500 .6v13.400M.6 2.800h11.200M.6 12h11.200" stroke="#b0b0b0" stroke-width=".8" fill="none"/><rect x="0" y="0" width="12.400" height="2.600" fill="#e03a3a"/></svg>
<span class="t" style='left:820.0px;top:232.0px;font-size:11px;line-height:11px;color:#404040;letter-spacing:-0.23px;'>TopMargin</span>
<svg style="left:820.6px;top:252.2px;" width="11" height="12" viewBox="0 0 11 12"><path d="M4.100 0h2.800L11 11.600H8.500l-.9-2.700H3.300l-.9 2.700H0zM5.500 2.300L3.900 7.100h3.200z" fill="#1c83d4"/></svg>
<span class="t" style='left:837.69px;top:252.0px;font-size:11px;line-height:11px;color:#404040;letter-spacing:-0.29px;'>label1</span>
<svg style="left:820.6px;top:272.2px;" width="11" height="12" viewBox="0 0 11 12"><path d="M4.100 0h2.800L11 11.600H8.500l-.9-2.700H3.300l-.9 2.700H0zM5.500 2.300L3.900 7.100h3.200z" fill="#1c83d4"/></svg>
<span class="t" style='left:837.69px;top:272.0px;font-size:11px;line-height:11px;color:#404040;letter-spacing:-0.29px;'>label2</span>
<svg style="left:785px;top:295.7px;" width="11" height="7" viewBox="0 0 11 7"><path d="M.6 .6l4.600 4.800L9.800 .6" fill="none" stroke="#333" stroke-width="1.400"/></svg>
<svg style="left:801.9px;top:290.2px;" width="13" height="15" viewBox="0 0 13 15"><rect x=".6" y=".6" width="11.200" height="13.400" fill="#fff" stroke="#666" stroke-width="1.200"/><path d="M2.900 .6v13.400M9.500 .6v13.400M.6 2.800h11.200M.6 12h11.200" stroke="#b0b0b0" stroke-width=".8" fill="none"/><path d="M4.500 5.100h3.400M4.500 7.400h3.400M4.500 9.700h3.400" stroke="#1c7ed6" stroke-width="1.100"/></svg>
<span class="t" style='left:820.0px;top:292.0px;font-size:11px;line-height:11px;color:#404040;letter-spacing:-0.23px;'>Detail</span>
<svg style="left:818.8px;top:312.4px;" width="15" height="12" viewBox="0 0 15 12"><rect x=".5" y=".5" width="13" height="10.800" fill="#fff" stroke="#555" stroke-width="1"/><path d="M2 9.600l3.200-4.600 3.200 4.600z" fill="#2c9447"/><path d="M7.400 7l1.300-1.300 2.800 3.900H9.200z" fill="#9fd1ab"/><circle cx="10" cy="3.600" r="1.400" fill="#f78d2d"/></svg>
<span class="t" style='left:837.69px;top:312.0px;font-size:11px;line-height:11px;color:#404040;letter-spacing:-0.24px;'>pictureBox1</span>
<svg style="left:818.8px;top:333.3px;" width="16" height="14" viewBox="0 0 16 14"><rect x="0" y="0" width="1.4" height="8.8" fill="#444"/><rect x="2.4" y="0" width="1.4" height="8.8" fill="#444"/><rect x="4.8" y="0" width="1.6" height="8.8" fill="#444"/><rect x="7.2" y="0" width="1.2" height="8.8" fill="#444"/><rect x="9.2" y="0" width="1.6" height="4" fill="#444"/><rect x="12.2" y="0" width="2" height="4" fill="#444"/><path d="M8.200 5c0-1.700 6.600-1.700 6.600 0v6.400c0 1.700-6.600 1.700-6.600 0z" fill="#f7922f" stroke="#fff" stroke-width=".8"/><ellipse cx="11.500" cy="4.900" rx="2.300" ry=".8" fill="#fde6d2"/></svg>
<span class="t" style='left:837.69px;top:332.0px;font-size:11px;line-height:11px;color:#404040;letter-spacing:-0.55px;transform-origin:0 50%;transform:scaleX(0.9737);'>barCode1</span>
<svg style="left:820px;top:351.2px;" width="15" height="14" viewBox="0 0 15 14"><path d="M4.100 0h2.800L11 11.600H8.500l-.9-2.700H3.300l-.9 2.700H0zM5.500 2.300L3.900 7.100h3.200z" fill="#1c83d4"/><path d="M7 7.400c0-1.700 6.400-1.700 6.400 0v4.600c0 1.700-6.400 1.700-6.400 0z" fill="#f7922f" stroke="#fff" stroke-width=".8"/><ellipse cx="10.200" cy="7.300" rx="2.200" ry=".8" fill="#fde6d2"/></svg>
<span class="t" style='left:837.69px;top:352.0px;font-size:11px;line-height:11px;color:#404040;letter-spacing:-0.29px;'>label3</span>
<svg style="left:801.9px;top:370.2px;" width="13" height="15" viewBox="0 0 13 15"><rect x=".6" y=".6" width="11.200" height="13.400" fill="#fff" stroke="#666" stroke-width="1.200"/><path d="M2.900 .6v13.400M9.500 .6v13.400M.6 2.800h11.200M.6 12h11.200" stroke="#b0b0b0" stroke-width=".8" fill="none"/><rect x="0" y="12.200" width="12.400" height="2.400" fill="#2c9447"/></svg>
<span class="t" style='left:820.0px;top:372.0px;font-size:11px;line-height:11px;color:#404040;letter-spacing:-0.26px;'>BottomMargin</span>
<svg style="left:781.6px;top:389.7px;" width="17" height="16" viewBox="0 0 17 16"><path d="M3 3V.6h9.400v9.800H10" fill="#fff" stroke="#555" stroke-width="1.100"/><rect x=".6" y="3.400" width="9.400" height="10.400" fill="#fff" stroke="#555" stroke-width="1.100"/><path d="M5.200 12.200l.8-2.800 6.600-6.600 2 2-6.600 6.600z" fill="#1c83d4"/><path d="M5.200 12.200l.8-2.800 2 2z" fill="#f79a3e"/></svg>
<span class="t" style='left:801.79px;top:392.0px;font-size:11px;line-height:11px;color:#404040;letter-spacing:-0.41px;'>Styles</span>
<svg style="left:767.3px;top:415.7px;" width="11" height="7" viewBox="0 0 11 7"><path d="M.6 .6l4.600 4.800L9.800 .6" fill="none" stroke="#333" stroke-width="1.400"/></svg>
<svg style="left:784.7px;top:410.7px;" width="11.2" height="14" viewBox="0 0 11.2 14"><path d="M0 2.24C0 -0.70 11.2 -0.70 11.2 2.24V11.76C11.2 14.70 0 14.70 0 11.76z" fill="#f78a30"/><ellipse cx="5.6" cy="2.38" rx="4.50" ry="1.40" fill="#fbe3cf"/></svg>
<span class="t" style='left:801.79px;top:412.0px;font-size:11px;line-height:11px;color:#404040;letter-spacing:-0.4px;'>Data Sources</span>
<svg style="left:801px;top:430.7px;" width="16" height="15" viewBox="0 0 16 15"><path d="M0 2C0 -.4 9.600 -.4 9.600 2v8.400c0 2.400-9.600 2.400-9.600 0z" fill="#f7922f"/><ellipse cx="4.800" cy="2" rx="3.600" ry="1.100" fill="#fde6d2"/><circle cx="10.800" cy="10.400" r="3" fill="#fff" stroke="#1c7ed6" stroke-width="2"/></svg>
<span class="t" style='left:820.0px;top:432.0px;font-size:11px;line-height:11px;color:#404040;letter-spacing:-0.55px;transform-origin:0 50%;transform:scaleX(0.9835);'>SalesData</span>
<div style="left:965px;top:165px;width:34px;height:527px;background:#e6e6e6;border-left:1px solid #d2d2d2;"></div>
<span class="t" style='left:986px;top:190.4px;transform-origin:0 0;transform:rotate(90deg);font-size:11px;line-height:11px;color:#404040;letter-spacing:-0.5px;'>Field List</span>
<span class="t" style='left:986px;top:267px;transform-origin:0 0;transform:rotate(90deg);font-size:11px;line-height:11px;color:#404040;letter-spacing:-0.42px;'>Report Gallery</span>
<span class="t" style='left:986px;top:369px;transform-origin:0 0;transform:rotate(90deg);font-size:11px;line-height:11px;color:#404040;letter-spacing:-0.53px;'>Properties</span>
<svg style="left:974px;top:174.5px;" width="15" height="15" viewBox="0 0 15 15"><path d="M2.500 5L3.600 1.300M5.900 5L7 1.300" stroke="#f7922f" stroke-width="1.900" stroke-linecap="round" fill="none"/><ellipse cx="11.100" cy="5.400" rx="3" ry="5" fill="#f7922f"/><rect x=".6" y="7" width="2.300" height="7.200" fill="none" stroke="#555" stroke-width="1"/><rect x="4.900" y="7" width="2.300" height="7.200" fill="none" stroke="#555" stroke-width="1"/></svg>
<svg style="left:974px;top:250px;" width="16" height="15" viewBox="0 0 16 15"><rect x="2.800" y=".7" width="11.800" height="11.300" rx="1.200" fill="#9a9a9a" stroke="#777" stroke-width="1"/><rect x=".7" y="2.900" width="12.200" height="11.400" rx="1.200" fill="#f5f5f5" stroke="#666" stroke-width="1.300"/><rect x="3" y="4.700" width="3.200" height="1.700" rx=".6" fill="#f7922f"/><rect x="3" y="7.500" width="5" height="1.900" rx=".6" fill="#1c7ed6"/><rect x="3" y="10.500" width="7" height="2" rx=".6" fill="#e8262c"/></svg>
<svg style="left:974px;top:352px;" width="15" height="16" viewBox="0 0 15 16"><rect x="3" y="0" width="1.5" height="1.5" fill="#9a9a9a"/><rect x="3" y="3" width="1.5" height="3" fill="#9a9a9a"/><rect x="6" y="0" width="1.5" height="1.5" fill="#9a9a9a"/><rect x="6" y="3" width="1.5" height="4.2" fill="#9a9a9a"/><rect x="9" y="0" width="2" height="1.5" fill="#9a9a9a"/><rect x="9" y="3" width="2" height="8.5" fill="#9a9a9a"/><rect x="12.100" y="0" width="1.900" height="11.800" fill="#1c83d4"/><path d="M8.15 10.34L8.15 11.66L6.92 11.70L6.56 12.57L7.40 13.47L6.47 14.40L5.57 13.56L4.70 13.92L4.66 15.15L3.34 15.15L3.30 13.92L2.43 13.56L1.53 14.40L0.60 13.47L1.44 12.57L1.08 11.70L-0.15 11.66L-0.15 10.34L1.08 10.30L1.44 9.43L0.60 8.53L1.53 7.60L2.43 8.44L3.30 8.08L3.34 6.85L4.66 6.85L4.70 8.08L5.57 8.44L6.47 7.60L7.40 8.53L6.56 9.43L6.92 10.30z" fill="#1c83d4"/><circle cx="4" cy="11" r="1.2" fill="#e6e6e6"/></svg>
<div style="left:43px;top:457px;width:922px;height:1px;background:#d8d8d8;"></div>
<div style="left:43px;top:458px;width:922px;height:43px;background:#f6f6f5;"></div>
<div style="left:43px;top:501px;width:922px;height:26px;background:#eeeeee;"></div>
<div style="left:43px;top:527px;width:922px;height:21px;background:#f7f7f7;"></div>
<div style="left:43px;top:548px;width:922px;height:1px;background:#b4b4b4;"></div>
<div style="left:43px;top:549px;width:922px;height:143px;background:#fff;"></div>
<span class="t" style='left:52.45px;top:469.1px;font-size:19px;line-height:19px;color:#333;letter-spacing:-0.54px;'>Report Design Analyzer</span>
<svg style="left:908.7px;top:474.4px;" width="8" height="9" viewBox="0 0 8 9"><path d="M2 .5h4M2.600 .5v3L1.200 5.200h5.600L5.400 3.500v-3M.6 5.200h6.800M4 5.200v3.500" fill="none" stroke="#555" stroke-width="1"/></svg>
<svg style="left:940px;top:474px;" width="9" height="9" viewBox="0 0 9 9"><path d="M.4 .4l7.800 7.800M8.200 .4L.4 8.200" stroke="#555" stroke-width="1" fill="none"/></svg>
<div style="left:47.3px;top:503.3px;width:141.4px;height:20px;background:#fff;border:1px solid #b5b5b5;"></div>
<span class="t" style='left:51.9px;top:507.6px;font-size:11px;line-height:11px;color:#404040;letter-spacing:-0.37px;'>All</span>
<svg style="left:177.8px;top:512px;" width="6" height="3" viewBox="0 0 6 3"><path d="M0 0h5.400L2.700 2.800z" fill="#777"/></svg>
<div style="left:195.5px;top:503px;width:1px;height:20px;background:#d4d4d4;"></div>
<div style="left:262.3px;top:503px;width:1px;height:20px;background:#d4d4d4;"></div>
<div style="left:355px;top:503px;width:1px;height:20px;background:#d4d4d4;"></div>
<div style="left:448.5px;top:503px;width:1px;height:20px;background:#d4d4d4;"></div>
<svg style="left:204.4px;top:508px;" width="12.4" height="12.4" viewBox="0 0 12.4 12.4"><circle cx="6.2" cy="6.2" r="6.2" fill="#d9232e"/><path d="M3.9000000000000004 3.9000000000000004l4.600 4.600M8.5 3.9000000000000004l-4.600 4.600" stroke="#fff" stroke-width="2" stroke-linecap="round"/></svg>
<span class="t" style='left:220.74px;top:508.4px;font-size:12px;line-height:12px;color:#404040;letter-spacing:-0.4px;'>1 Error</span>
<svg style="left:270.6px;top:507.6px;" width="13.6" height="11.6" viewBox="0 0 13.6 11.6"><path d="M6.8 0.3L13.4 11.299999999999999H.2z" fill="#f79a2e" stroke="#f79a2e" stroke-width=".6" stroke-linejoin="round"/><rect x="6.0" y="3.71" width="1.600" height="4.18" fill="#5a3a10"/><rect x="6.0" y="8.82" width="1.600" height="1.500" fill="#5a3a10"/></svg>
<span class="t" style='left:287.34px;top:508.4px;font-size:12px;line-height:12px;color:#404040;letter-spacing:-0.05px;'>4 Warnings</span>
<svg style="left:362.4px;top:507.6px;" width="14" height="14" viewBox="0 0 14 14"><circle cx="6.800" cy="6.800" r="6.800" fill="#1c7fd6"/><rect x="5.800" y="5.600" width="2.200" height="5.200" fill="#fff"/><rect x="4.800" y="5.600" width="2" height="1.200" fill="#fff"/><rect x="4.600" y="10" width="4.600" height="1.200" fill="#fff"/><circle cx="6.800" cy="3.400" r="1.300" fill="#fff"/></svg>
<span class="t" style='left:378.84px;top:508.4px;font-size:12px;line-height:12px;color:#404040;letter-spacing:-0.28px;'>0 Messages</span>
<svg style="left:456px;top:507px;" width="15" height="14" viewBox="0 0 15 14"><path d="M.4 .6h10.800L7 6v6.400L4.600 10V6z" fill="#b4b4b4"/><path d="M9.200 8.600l4.400 4.400M13.600 8.600L9.200 13" stroke="#b4b4b4" stroke-width="1.200"/></svg>
<div style="left:810.4px;top:503.6px;width:150.6px;height:19.4px;background:#fff;border:1px solid #b5b5b5;"></div>
<span class="t" style='left:814.6px;top:507.6px;font-size:11px;line-height:11px;color:#7a7a7a;letter-spacing:-0.13px;'>Enter text to search...</span>
<svg style="left:948.6px;top:507.6px;" width="10" height="11" viewBox="0 0 10 11"><circle cx="5.800" cy="4" r="3.300" fill="none" stroke="#777" stroke-width="1"/><path d="M3.600 6.400L.6 9.800" stroke="#777" stroke-width="1.200"/></svg>
<div style="left:91px;top:529.4px;width:1px;height:16.6px;background:#a9a9a9;"></div>
<div style="left:141px;top:529.4px;width:1px;height:16.6px;background:#a9a9a9;"></div>
<div style="left:856px;top:529.4px;width:1px;height:16.6px;background:#a9a9a9;"></div>
<span class="t" style='left:95.8px;top:532.4px;font-size:11px;line-height:11px;color:#6a6a6a;letter-spacing:-0.55px;transform-origin:0 50%;transform:scaleX(0.9535);'>Code</span>
<span class="t" style='left:145.4px;top:532.4px;font-size:11px;line-height:11px;color:#6a6a6a;letter-spacing:-0.26px;'>Description</span>
<span class="t" style='left:860.39px;top:532.4px;font-size:11px;line-height:11px;color:#6a6a6a;letter-spacing:-0.47px;'>Source</span>
<div style="left:43px;top:629px;width:922px;height:19.6px;background:#e8e8e8;"></div>
<svg style="left:53.2px;top:554.5px;" width="9" height="9" viewBox="0 0 9 9"><rect x=".5" y=".5" width="8" height="8" fill="#fff" stroke="#8a8a8a" stroke-width="1"/><path d="M2.400 4.500h4.200" stroke="#666" stroke-width="1"/><path d="M4.500 2.400v4.200" stroke="#666" stroke-width="1"/></svg>
<svg style="left:74.6px;top:553.4px;" width="14.6" height="11.4" viewBox="0 0 14.6 11.4"><path d="M7.3 0.3L14.4 11.1H.2z" fill="#fbb02c" stroke="#fbb02c" stroke-width=".6" stroke-linejoin="round"/><rect x="6.5" y="3.65" width="1.600" height="4.10" fill="#4a3a18"/><rect x="6.5" y="8.66" width="1.600" height="1.500" fill="#4a3a18"/></svg>
<span class="t" style='left:94.89px;top:554.2px;font-size:11px;line-height:11px;color:#333;letter-spacing:-0.55px;transform-origin:0 50%;transform:scaleX(0.9183);'>XRE252</span>
<span class="t" style='left:145.0px;top:554.2px;font-size:11px;line-height:11px;color:#333;letter-spacing:-0.22px;'>The expression is not valid</span>
<a class="t" style='left:860.39px;top:554.2px;font-size:11px;line-height:11px;color:#1c7fd6;letter-spacing:-0.47px;text-decoration:underline;'>barCode1</a>
<svg style="left:53.2px;top:574.5px;" width="9" height="9" viewBox="0 0 9 9"><rect x=".5" y=".5" width="8" height="8" fill="#fff" stroke="#8a8a8a" stroke-width="1"/><path d="M2.400 4.500h4.200" stroke="#666" stroke-width="1"/><path d="M4.500 2.400v4.200" stroke="#666" stroke-width="1"/></svg>
<svg style="left:74.6px;top:573.4px;" width="14.6" height="11.4" viewBox="0 0 14.6 11.4"><path d="M7.3 0.3L14.4 11.1H.2z" fill="#fbb02c" stroke="#fbb02c" stroke-width=".6" stroke-linejoin="round"/><rect x="6.5" y="3.65" width="1.600" height="4.10" fill="#4a3a18"/><rect x="6.5" y="8.66" width="1.600" height="1.500" fill="#4a3a18"/></svg>
<span class="t" style='left:94.89px;top:574.2px;font-size:11px;line-height:11px;color:#333;letter-spacing:-0.55px;transform-origin:0 50%;transform:scaleX(0.9183);'>XRE202</span>
<span class="t" style='left:145.0px;top:574.2px;font-size:11px;line-height:11px;color:#333;letter-spacing:-0.21px;'>The control is overlapped</span>
<a class="t" style='left:860.39px;top:574.2px;font-size:11px;line-height:11px;color:#1c7fd6;letter-spacing:-0.29px;text-decoration:underline;'>label2</a>
<svg style="left:53.2px;top:594.5px;" width="9" height="9" viewBox="0 0 9 9"><rect x=".5" y=".5" width="8" height="8" fill="#fff" stroke="#8a8a8a" stroke-width="1"/><path d="M2.400 4.500h4.200" stroke="#666" stroke-width="1"/></svg>
<svg style="left:74.6px;top:593.4px;" width="14.6" height="11.4" viewBox="0 0 14.6 11.4"><path d="M7.3 0.3L14.4 11.1H.2z" fill="#fbb02c" stroke="#fbb02c" stroke-width=".6" stroke-linejoin="round"/><rect x="6.5" y="3.65" width="1.600" height="4.10" fill="#4a3a18"/><rect x="6.5" y="8.66" width="1.600" height="1.500" fill="#4a3a18"/></svg>
<span class="t" style='left:94.89px;top:594.2px;font-size:11px;line-height:11px;color:#333;letter-spacing:-0.55px;transform-origin:0 50%;transform:scaleX(0.9183);'>XRE202</span>
<span class="t" style='left:145.0px;top:594.2px;font-size:11px;line-height:11px;color:#333;letter-spacing:-0.21px;'>The control is overlapped</span>
<a class="t" style='left:860.39px;top:594.2px;font-size:11px;line-height:11px;color:#1c7fd6;letter-spacing:-0.29px;text-decoration:underline;'>label1</a>
<span class="t" style='left:97.89px;top:614.2px;font-size:11px;line-height:11px;color:#333;letter-spacing:-0.22px;'>Ensure that report controls do not overlap each other. Overlapped controls may be exported incorrectly to HTML, RTF, DOCX, XLS, XLSX, CSV, and Text formats.</span>
<svg style="left:53.2px;top:634.5px;" width="9" height="9" viewBox="0 0 9 9"><rect x=".5" y=".5" width="8" height="8" fill="#fff" stroke="#8a8a8a" stroke-width="1"/><path d="M2.400 4.500h4.200" stroke="#666" stroke-width="1"/><path d="M4.500 2.400v4.200" stroke="#666" stroke-width="1"/></svg>
<svg style="left:74.6px;top:633.4px;" width="14.6" height="11.4" viewBox="0 0 14.6 11.4"><path d="M7.3 0.3L14.4 11.1H.2z" fill="#fbb02c" stroke="#fbb02c" stroke-width=".6" stroke-linejoin="round"/><rect x="6.5" y="3.65" width="1.600" height="4.10" fill="#4a3a18"/><rect x="6.5" y="8.66" width="1.600" height="1.500" fill="#4a3a18"/></svg>
<span class="t" style='left:94.89px;top:634.2px;font-size:11px;line-height:11px;color:#333;letter-spacing:-0.55px;transform-origin:0 50%;transform:scaleX(0.9183);'>XRE021</span>
<span class="t" style='left:145.0px;top:634.2px;font-size:11px;line-height:11px;color:#333;letter-spacing:-0.14px;'>The Text property&#x27;s expression does not correspond to the parent table</span>
<a class="t" style='left:860.39px;top:634.2px;font-size:11px;line-height:11px;color:#1c7fd6;letter-spacing:-0.29px;text-decoration:underline;'>label3</a>
<svg style="left:53.2px;top:654.5px;" width="9" height="9" viewBox="0 0 9 9"><rect x=".5" y=".5" width="8" height="8" fill="#fff" stroke="#8a8a8a" stroke-width="1"/><path d="M2.400 4.500h4.200" stroke="#666" stroke-width="1"/><path d="M4.500 2.400v4.200" stroke="#666" stroke-width="1"/></svg>
<svg style="left:75.6px;top:652.8px;" width="12.4" height="12.4" viewBox="0 0 12.4 12.4"><circle cx="6.2" cy="6.2" r="6.2" fill="#d9232e"/><path d="M3.9000000000000004 3.9000000000000004l4.600 4.600M8.5 3.9000000000000004l-4.600 4.600" stroke="#fff" stroke-width="2" stroke-linecap="round"/></svg>
<span class="t" style='left:94.89px;top:654.2px;font-size:11px;line-height:11px;color:#333;letter-spacing:-0.55px;transform-origin:0 50%;transform:scaleX(0.9183);'>XRE003</span>
<span class="t" style='left:145.0px;top:654.2px;font-size:11px;line-height:11px;color:#333;letter-spacing:-0.19px;'>Unable to load the content from the specified file: &#x27;C:\Users\Public\Documents\DevExpress Demos 21.1\Components\Reporting\Bin\image.png&#x27;</span>
<a class="t" style='left:860.39px;top:654.2px;font-size:11px;line-height:11px;color:#1c7fd6;letter-spacing:-0.29px;text-decoration:underline;'>pictureBox1</a>
<div style="left:1px;top:692px;width:998px;height:1px;background:#dadada;"></div>
<div style="left:1px;top:693px;width:998px;height:21px;background:#f0f0f0;"></div>
<span class="t" style='left:8.99px;top:699px;font-size:11px;line-height:11px;color:#333;letter-spacing:-0.22px;'>pictureBox1 { Location:379,2 Size:100,100 }</span>
<svg style="left:779px;top:697.6px;" width="14" height="14" viewBox="0 0 14 14"><path d="M1 10.400c1.600-1.400 1.800-3 2-5.400C3.200 2.400 4.600 1 6.400 1s3.200 1.400 3.400 4c.2 2.400.4 4 2 5.400z" fill="#444"/><path d="M5 11.400a1.500 1.500 0 0 0 3 0z" fill="#444"/><circle cx="10.200" cy="3" r="3" fill="#e0262e"/></svg>
<span class="t" style='left:795.29px;top:699px;font-size:11px;line-height:11px;color:#333;'>5</span>
<div style="left:811.5px;top:695px;width:1px;height:17px;background:#d4d4d4;"></div>
<span class="t" style='left:822.1px;top:699px;font-size:11px;line-height:11px;color:#333;letter-spacing:-0.55px;transform-origin:0 50%;transform:scaleX(0.9739);'>100%</span>
<div style="left:864.8px;top:702.6px;width:8.4px;height:2px;background:#6e6e6e;"></div>
<div style="left:877.8px;top:703px;width:84px;height:1px;background:#b9b9b9;"></div>
<div style="left:877.8px;top:702.6px;width:31px;height:1.6px;background:#1c7fd6;"></div>
<div style="left:907px;top:697.6px;width:4.6px;height:12.8px;background:#666;"></div>
<div style="left:966.6px;top:702.6px;width:8px;height:2px;background:#6e6e6e;"></div>
<div style="left:969.6px;top:699.6px;width:2px;height:8px;background:#6e6e6e;"></div>
<svg style="left:985px;top:700px;" width="11" height="12" viewBox="0 0 11 12"><rect x="8.2" y="0.7" width="1.600" height="1.600" fill="#9c9c9c"/><rect x="8.2" y="4.7" width="1.600" height="1.600" fill="#9c9c9c"/><rect x="4.1" y="4.7" width="1.600" height="1.600" fill="#9c9c9c"/><rect x="8.2" y="8.7" width="1.600" height="1.600" fill="#9c9c9c"/><rect x="4.1" y="8.7" width="1.600" height="1.600" fill="#9c9c9c"/><rect x="0.1" y="8.7" width="1.600" height="1.600" fill="#9c9c9c"/></svg>
</body></html>
